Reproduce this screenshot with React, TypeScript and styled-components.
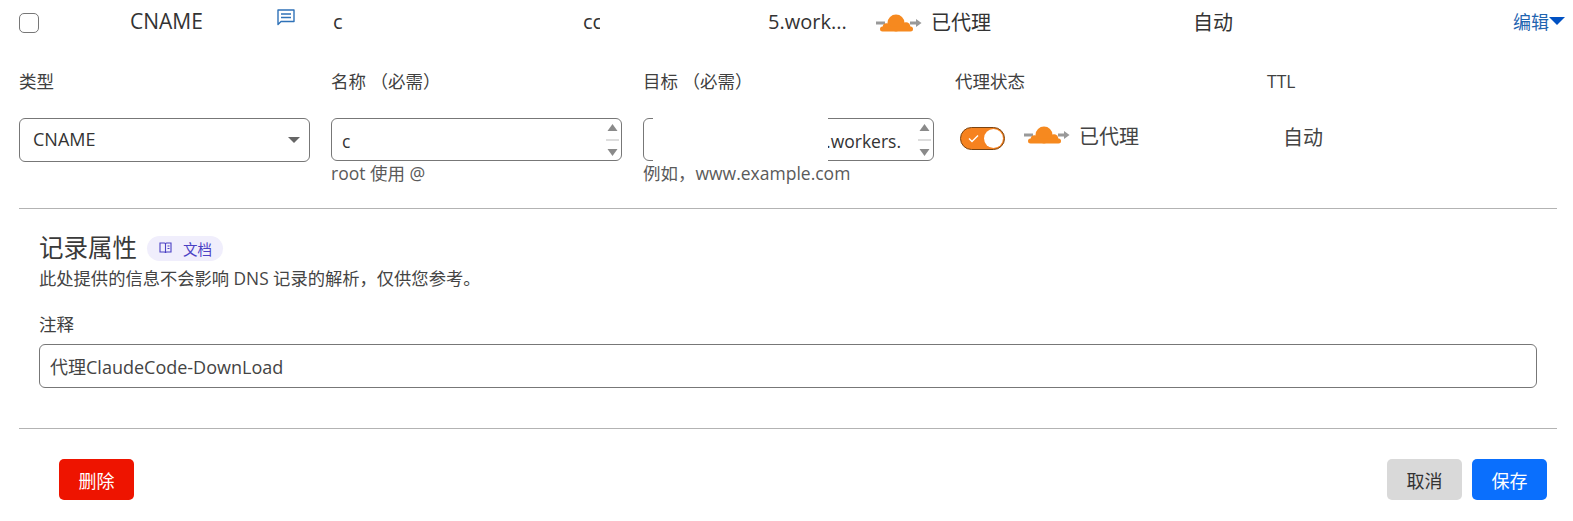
import styled, { createGlobalStyle } from "styled-components";

const GlobalStyle = createGlobalStyle`
  html, body {
    margin: 0;
    background: #fff;
  }

  body {
    font-family: "Open Sans", "Noto Sans CJK SC", sans-serif;
    color: #333;
    overflow: hidden;
  }
`;

function CommentIcon() {
  return (
    <svg width="18" height="17" viewBox="0 0 18 17" fill="none" stroke="#2f72b8" strokeWidth="1.4">
      <path d="M1 1h16v11.500H4L1 15.500z" strokeLinejoin="round" />
      <path d="M4 5h10M4 8.500h10" />
    </svg>
  );
}

function ProxyCloud() {
  return (
    <svg width="46" height="18" viewBox="0 0 46 18">
      <path d="M0 7.500h9v3H0zM34 7.500h6V5l5.500 4-5.500 4v-2.500h-6z" fill="#999" />
      <g fill="#f6891f">
        <circle cx="20" cy="9" r="8.500" />
        <circle cx="10.500" cy="13" r="3.800" />
        <circle cx="30" cy="12.500" r="4.300" />
        <rect x="4" y="12.500" width="33" height="5" rx="2.500" />
      </g>
    </svg>
  );
}

function BookIcon() {
  return (
    <svg width="13" height="12" viewBox="0 0 13 12" fill="none" stroke="#4b41c4" strokeWidth="1.1">
      <path d="M1 1h4.500c.6 0 1 .4 1 1v9c0-.6-.4-1-1-1H1zM12 1H7.500c-.6 0-1 .4-1 1v9c0-.6.4-1 1-1H12z" />
      <path d="M8.500 4H10.500M8.500 6.500H10.500" />
    </svg>
  );
}

function Spinner() {
  return (
    <SpinBox>
      <svg width="13" height="34" viewBox="0 0 13 34">
        <path d="M6.500 1l5 7h-10z" fill="#8a8a8a" />
        <path d="M0 17h13" stroke="#bbb" />
        <path d="M6.500 33l-5-7h10z" fill="#8a8a8a" />
      </svg>
    </SpinBox>
  );
}

export default function App() {
  return (
    <Page>
      <GlobalStyle />
      <RecordRow>
        <Checkbox type="checkbox" />
        <RowType>CNAME</RowType>
        <RowComment>
          <CommentIcon />
        </RowComment>
        <span>c</span>
        <RowTarget>
          <Clipped>cc</Clipped>
          <span>5.work...</span>
        </RowTarget>
        <RowProxy>
          <CloudSlot $shift={4}>
            <ProxyCloud />
          </CloudSlot>
          <span>已代理</span>
        </RowProxy>
        <span>自动</span>
        <EditLink>
          编辑
          <EditCaret />
        </EditLink>
      </RecordRow>

      <FormGrid>
        <Field>
          <Label>类型</Label>
          <SelectBox>
            CNAME
            <SelectCaret />
          </SelectBox>
        </Field>
        <Field>
          <Label>名称 （必需）</Label>
          <InputBox>
            <TextInput readOnly value="c" />
            <Spinner />
          </InputBox>
          <Hint>root 使用 @</Hint>
        </Field>
        <Field>
          <Label>目标 （必需）</Label>
          <InputBox>
            <TextInput readOnly value=".workers." $alignRight />
            <Spinner />
            <TargetMask />
          </InputBox>
          <Hint>例如，www.example.com</Hint>
        </Field>
        <Field>
          <Label>代理状态</Label>
          <ProxyState>
            <Toggle>
              <svg width="11" height="9" viewBox="0 0 11 9" fill="none" stroke="#fff" strokeWidth="1.4">
                <path d="M1 4.500l3 3 6-6" />
              </svg>
              <Knob />
            </Toggle>
            <CloudSlot $shift={-3}>
              <ProxyCloud />
            </CloudSlot>
            <ProxyLabel>已代理</ProxyLabel>
          </ProxyState>
        </Field>
        <Field>
          <Label>TTL</Label>
          <TtlValue>自动</TtlValue>
        </Field>
      </FormGrid>

      <Divider />

      <Attributes>
        <TitleRow>
          <Title>记录属性</Title>
          <DocChip>
            <BookIcon />
            文档
          </DocChip>
        </TitleRow>
        <Description>此处提供的信息不会影响 DNS 记录的解析，仅供您参考。</Description>
        <CommentLabel>注释</CommentLabel>
        <CommentInput readOnly value="代理ClaudeCode-DownLoad" />
      </Attributes>

      <Divider />

      <Actions>
        <Button $variant="danger">删除</Button>
        <RightActions>
          <Button $variant="muted">取消</Button>
          <Button $variant="primary">保存</Button>
        </RightActions>
      </Actions>
    </Page>
  );
}

const Page = styled.div`
  width: 1573px;
  height: 521px;
  box-sizing: border-box;
  padding: 0 16px 0 19px;
  overflow: hidden;
`;

const RecordRow = styled.div`
  display: grid;
  grid-template-columns: 111px 147px 56px 250px 293px 317px 1fr auto;
  align-items: center;
  height: 46px;
  box-sizing: border-box;
  padding-bottom: 4px;
  font-size: 20px;
`;

const Checkbox = styled.input`
  appearance: none;
  width: 20px;
  height: 20px;
  margin: 4px 0 0;
  border: 1px solid #777;
  border-radius: 5px;
  background: #fff;
`;

const RowType = styled.span`
  font-size: 21px;
`;

const RowComment = styled.span`
  display: flex;
  height: 24px;
  align-items: flex-start;
`;

const RowTarget = styled.span`
  display: flex;
  gap: 168px;
`;

const Clipped = styled.span`
  width: 17px;
  overflow: hidden;
`;

const RowProxy = styled.span`
  display: flex;
  align-items: center;
  gap: 9px;
`;

const CloudSlot = styled.span<{ $shift: number }>`
  display: flex;
  margin-top: ${(p) => (p.$shift > 0 ? p.$shift : 0)}px;
  margin-bottom: ${(p) => (p.$shift < 0 ? -p.$shift * 2 : 0)}px;
`;

const EditLink = styled.a`
  display: flex;
  align-items: center;
  margin-right: -8px;
  color: #1f64b0;
  font-size: 18px;
`;

const EditCaret = styled.span`
  width: 0;
  height: 0;
  border-left: 8px solid transparent;
  border-right: 8px solid transparent;
  border-top: 8px solid #0051c3;
`;

const FormGrid = styled.div`
  display: grid;
  grid-template-columns: repeat(5, 291px);
  column-gap: 21px;
  height: 162px;
  box-sizing: border-box;
  padding-top: 21px;
`;

const Field = styled.div`
  display: flex;
  flex-direction: column;
`;

const Label = styled.label`
  height: 28px;
  margin-bottom: 23px;
  font-size: 17.5px;
  line-height: 28px;
  white-space: pre;
  color: #404040;
`;

const SelectBox = styled.div`
  position: relative;
  display: flex;
  align-items: center;
  height: 44px;
  box-sizing: border-box;
  padding: 0 0 2px 13px;
  border: 1px solid #777;
  border-radius: 6px;
  font-size: 18px;
`;

const SelectCaret = styled.span`
  position: absolute;
  right: 9px;
  top: 18px;
  border-left: 6px solid transparent;
  border-right: 6px solid transparent;
  border-top: 6px solid #666;
`;

const InputBox = styled.div`
  position: relative;
  display: flex;
  height: 43px;
  box-sizing: border-box;
  border: 1px solid #777;
  border-radius: 6px;
`;

const TextInput = styled.input<{ $alignRight?: boolean }>`
  flex: 1;
  min-width: 0;
  box-sizing: border-box;
  padding: 3px ${(p) => (p.$alignRight ? "17px" : "0")} 0 ${(p) => (p.$alignRight ? "0" : "10px")};
  border: none;
  outline: none;
  background: transparent;
  font-family: inherit;
  font-size: 17.5px;
  color: #333;
  text-align: ${(p) => (p.$alignRight ? "right" : "left")};
`;

const SpinBox = styled.div`
  display: flex;
  align-items: center;
  padding: 0 2px 0 0;
`;

const TargetMask = styled.div`
  position: absolute;
  left: 9px;
  top: -2px;
  bottom: -6px;
  width: 175px;
  background: #fff;
`;

const Hint = styled.div`
  margin-top: 1px;
  font-size: 17.5px;
  line-height: 22px;
  color: #5a5a5a;
`;

const ProxyState = styled.div`
  display: flex;
  align-items: center;
  height: 40px;
  padding-left: 5px;
`;

const Toggle = styled.div`
  display: flex;
  align-items: center;
  justify-content: space-between;
  width: 45px;
  height: 23px;
  box-sizing: border-box;
  margin-right: 19px;
  padding: 0 1px 0 7px;
  border: 1px solid #7a4412;
  border-radius: 12px;
  background: #f6821f;
`;

const Knob = styled.span`
  width: 19px;
  height: 19px;
  border-radius: 50%;
  background: #fff;
`;

const ProxyLabel = styled.span`
  margin: 0 0 6px 9px;
  font-size: 20px;
  color: #444;
`;

const TtlValue = styled.div`
  height: 40px;
  padding-left: 16px;
  font-size: 20px;
  line-height: 40px;
  color: #444;
`;

const Divider = styled.hr`
  width: 1538px;
  height: 1px;
  margin: 0;
  border: none;
  background: #b3b3b3;
`;

const Attributes = styled.section`
  display: flex;
  flex-direction: column;
  height: 219px;
  box-sizing: border-box;
  padding: 25px 0 0 20px;
`;

const TitleRow = styled.div`
  display: flex;
  align-items: center;
  gap: 10px;
  height: 28px;
`;

const Title = styled.h3`
  margin: 0;
  font-size: 24.5px;
  font-weight: 400;
  line-height: 28px;
  color: #3a3a3a;
`;

const DocChip = styled.span`
  display: flex;
  align-items: center;
  gap: 11px;
  height: 25px;
  padding: 0 11px 0 12px;
  border-radius: 13px;
  background: #f0eefc;
  font-size: 14.5px;
  color: #4b41c4;
`;

const Description = styled.p`
  margin: 5px 0 0;
  font-size: 17.3px;
  line-height: 24px;
  color: #444;
`;

const CommentLabel = styled.label`
  margin-top: 20px;
  font-size: 17.5px;
  line-height: 26px;
  color: #404040;
`;

const CommentInput = styled.input`
  width: 1498px;
  height: 44px;
  box-sizing: border-box;
  margin-top: 7px;
  padding: 0 10px;
  border: 1px solid #777;
  border-radius: 6px;
  outline: none;
  font-family: inherit;
  font-size: 18px;
  color: #444;
`;

const Actions = styled.div`
  display: flex;
  justify-content: space-between;
  padding: 30px 10px 0 40px;
`;

const RightActions = styled.div`
  display: flex;
  gap: 10px;
`;

const buttonColors = {
  danger: { bg: "#ee1400", fg: "#fff" },
  muted: { bg: "#d9d9d9", fg: "#333" },
  primary: { bg: "#0a6ffd", fg: "#fff" },
};

const Button = styled.button<{ $variant: keyof typeof buttonColors }>`
  width: 75px;
  height: 41px;
  padding: 0;
  border: none;
  border-radius: 5px;
  background: ${(p) => buttonColors[p.$variant].bg};
  color: ${(p) => buttonColors[p.$variant].fg};
  font-family: inherit;
  font-size: 18px;
`;
